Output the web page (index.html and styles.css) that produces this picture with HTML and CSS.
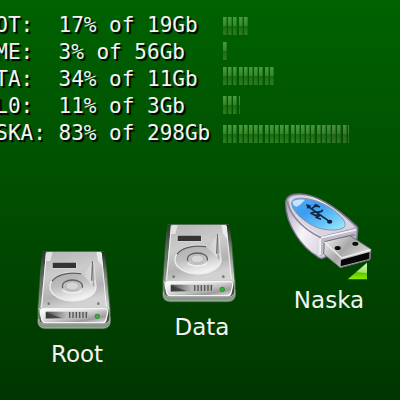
FILE: index.html
```
<!DOCTYPE html>
<html lang="en">
<head>
    <meta charset="UTF-8">
    <meta name="viewport" content="width=device-width, initial-scale=1.0">
    <title>Desktop</title>
    <link rel="stylesheet" href="styles.css">
</head>
<body>

    <!-- Gradients and the drive drawing shared by the icons -->
    <svg class="defs" aria-hidden="true">
        <defs>
            <linearGradient id="driveTop" x1="0" y1="0" x2="0.3" y2="1">
                <stop offset="0" stop-color="#b4b4b4"/>
                <stop offset="0.45" stop-color="#cccccc"/>
                <stop offset="0.8" stop-color="#b2b2b2"/>
                <stop offset="1" stop-color="#d2d2d2"/>
            </linearGradient>
            <linearGradient id="driveSide" x1="0" y1="0" x2="0" y2="1">
                <stop offset="0" stop-color="#1c2a1c"/>
                <stop offset="0.4" stop-color="#7c867c"/>
                <stop offset="1" stop-color="#d8dcd8"/>
            </linearGradient>
            <linearGradient id="driveFront" x1="0" y1="0" x2="1" y2="1">
                <stop offset="0" stop-color="#ffffff"/>
                <stop offset="0.4" stop-color="#e0e0e0"/>
                <stop offset="0.75" stop-color="#9c9c9c"/>
                <stop offset="1" stop-color="#e8e8e8"/>
            </linearGradient>
            <linearGradient id="driveVent" x1="0" y1="0" x2="1" y2="0">
                <stop offset="0" stop-color="#4c4c4c"/>
                <stop offset="0.5" stop-color="#bcbcbc"/>
                <stop offset="1" stop-color="#b4b4b4"/>
            </linearGradient>
            <linearGradient id="disc" x1="0" y1="0" x2="0.4" y2="1">
                <stop offset="0" stop-color="#acacac"/>
                <stop offset="0.5" stop-color="#bebebe"/>
                <stop offset="1" stop-color="#f2f2f2"/>
            </linearGradient>
            <linearGradient id="arm" x1="0" y1="0" x2="1" y2="0">
                <stop offset="0" stop-color="#c4c4c4"/>
                <stop offset="0.8" stop-color="#dedede"/>
                <stop offset="1" stop-color="#909090"/>
            </linearGradient>
            <linearGradient id="usbBody" x1="0" y1="0.3" x2="1" y2="0.7">
                <stop offset="0" stop-color="#b8b2c4"/>
                <stop offset="0.3" stop-color="#f6f4f8"/>
                <stop offset="0.6" stop-color="#dcd8e2"/>
                <stop offset="1" stop-color="#aaa4b8"/>
            </linearGradient>
            <linearGradient id="usbBlue" x1="0" y1="0" x2="1" y2="1">
                <stop offset="0" stop-color="#58b0f4"/>
                <stop offset="0.35" stop-color="#3c9cf0"/>
                <stop offset="0.7" stop-color="#68c4f8"/>
                <stop offset="1" stop-color="#a4f0fc"/>
            </linearGradient>
            <linearGradient id="usbPlug" x1="0" y1="0" x2="1" y2="0.6">
                <stop offset="0" stop-color="#f8f8f8"/>
                <stop offset="0.5" stop-color="#a8a8a8"/>
                <stop offset="1" stop-color="#dcdcdc"/>
            </linearGradient>
            <linearGradient id="mounted" x1="0.6" y1="0" x2="0.5" y2="1">
                <stop offset="0.1" stop-color="#c8f4a8"/>
                <stop offset="0.55" stop-color="#a0e060"/>
                <stop offset="0.6" stop-color="#5cc800"/>
                <stop offset="1" stop-color="#8cec00"/>
            </linearGradient>
            <symbol id="drive" viewBox="45 42 252 246">
                <!-- base and sides -->
                <path d="M68 48H252L262 110L272 222V264Q270 281 252 283H74Q55 281 52 264V226L60 110Z" fill="#6f8a6f" opacity="0.45"/>
                <path d="M55 252V262Q56 277 74 279H250Q268 277 270 262V246Z" fill="#8a968a" stroke="#c2ccc2" stroke-width="2"/>
                <path d="M67 50H254L269 226H55Z" fill="url(#driveSide)"/>
                <path d="M67 50L80 50L61 218L56 222Z" fill="#3c463c" opacity="0.5"/>
                <!-- lid -->
                <path d="M78 50H244L260 218H63Z" fill="url(#driveTop)"/>
                <path d="M82 51H98L91 78H78Z" fill="#efefef" opacity="0.75"/>
                <path d="M229 51H243L247 94L234 76Z" fill="#f4f4f4" opacity="0.8"/>
                <path d="M79 54L65 216M244 54L259 214" fill="none" stroke="#f2f2f2" stroke-width="3"/>
                <rect x="95" y="81" width="75" height="20" rx="3" fill="#d8d8d8"/>
                <rect x="98" y="83" width="70" height="16" fill="#343434"/>
                <!-- platter and arm -->
                <ellipse cx="159" cy="155" rx="69" ry="43" fill="url(#disc)" stroke="#eeeeee" stroke-width="4"/>
                <path d="M96 139C108 120 144 110 184 116" fill="none" stroke="#5a5a5a" stroke-width="4"/>
                <path d="M183 116C201 108 214 91 220 71L223 157C211 142 199 130 183 116Z" fill="url(#arm)"/>
                <path d="M218 78L215 137" stroke="#707070" stroke-width="4"/>
                <path d="M221 76L227 150" stroke="#e4e4e4" stroke-width="3"/>
                <ellipse cx="157" cy="153" rx="31" ry="19" fill="#c2c2c2"/>
                <path d="M128 159C124 143 140 135 157 135S190 143 187 158" fill="none" stroke="#606060" stroke-width="4"/>
                <ellipse cx="157" cy="153" rx="19" ry="12" fill="#d6d6d6" stroke="#a6a6a6" stroke-width="2"/>
                <path d="M128 166Q157 182 186 166" fill="none" stroke="#f2f2f2" stroke-width="4"/>
                <circle cx="86" cy="206" r="4" fill="#777777"/>
                <circle cx="235" cy="206" r="4" fill="#777777"/>
                <!-- front panel -->
                <path d="M62 219H261Q269 223 269 232V250Q267 265 253 266H72Q58 265 57 252V232Q57 223 62 219Z" fill="#404840" stroke="#c4ccc4" stroke-width="2"/>
                <path d="M66 221H258Q265 224 263 233L258 255Q256 263 247 263H76Q67 263 65 254L61 234Q59 223 66 221Z" fill="url(#driveFront)" stroke="#f4f4f4" stroke-width="4"/>
                <rect x="77" y="230" width="127" height="21" fill="url(#driveVent)"/>
                <path d="M78 232L124 249H78Z" fill="#282828" opacity="0.6"/>
                <path d="M149 231V249M159 231V249M169 231V249M179 231V249M189 231V249M199 231V249" stroke="#555555" stroke-width="4"/>
                <circle cx="232" cy="244" r="8" fill="#4c804c"/>
                <circle cx="232" cy="244" r="5" fill="#22c022"/>
            </symbol>
        </defs>
    </svg>

    <main class="desktop">
        <section class="monitor">
            <div class="usage">
                <div class="usage-row">ROOT:  17% of 19Gb</div>
                <div class="usage-row">HOME:  3% of 56Gb</div>
                <div class="usage-row">DATA:  34% of 11Gb</div>
                <div class="usage-row">VOL0:  11% of 3Gb</div>
                <div class="usage-row">NASKA: 83% of 298Gb</div>
            </div>
            <div class="meters">
                <div class="meter"><div class="meter-fill" style="width: 17%"></div></div>
                <div class="meter"><div class="meter-fill" style="width: 3%"></div></div>
                <div class="meter"><div class="meter-fill" style="width: 34%"></div></div>
                <div class="meter spaced"><div class="meter-fill" style="width: 11%"></div></div>
                <div class="meter spaced"><div class="meter-fill" style="width: 83%"></div></div>
            </div>
        </section>

        <button type="button" class="icon icon-root">
            <svg class="drive-art" aria-hidden="true"><use href="#drive"/></svg>
            <span class="icon-label">Root</span>
        </button>

        <button type="button" class="icon icon-data">
            <svg class="drive-art" aria-hidden="true"><use href="#drive"/></svg>
            <span class="icon-label">Data</span>
        </button>

        <button type="button" class="icon icon-naska">
            <svg class="usb-art" viewBox="25 35 276 270" aria-hidden="true">
                <!-- body -->
                <path d="M33 66C35 47 52 40 77 41C121 43 181 77 244 136Q251 141 249 151L246 183L142 235Q133 234 125 226C87 204 32 138 33 66Z" fill="url(#usbBody)" stroke="#77718b" stroke-width="4"/>
                <path d="M38 62C43 98 78 142 136 171L240 147" fill="none" stroke="#8d87a0" stroke-width="5"/>
                <path d="M42 57C48 48 62 45 80 47C126 50 184 86 239 139L234 144L139 164C85 139 45 98 42 57Z" fill="#d9d5e0"/>
                <path d="M139 173L243 150L240 181L150 202L142 230L135 226Z" fill="#c0bacb"/>
                <path d="M139 172L244 148" stroke="#f4f2f6" stroke-width="5"/>
                <path d="M137 176L136 223" stroke="#f4f2f6" stroke-width="5"/>
                <path d="M148 190L240 163" stroke="#948ca6" stroke-width="7"/>
                <!-- blue plate -->
                <path d="M51 67C54 55 68 52 88 54C126 58 169 78 198 108C209 119 214 131 210 139C199 151 166 151 143 146C109 140 50 98 51 67Z" fill="url(#usbBlue)" stroke="#8493ac" stroke-width="3"/>
                <path d="M54 66C57 57 72 56 91 58C83 65 77 76 65 79C58 78 54 72 54 66Z" fill="#e0f2ff" opacity="0.8"/>
                <g fill="none" stroke="#10233c" stroke-width="5" stroke-linejoin="round">
                    <path d="M101 79L165 124"/>
                    <path d="M111 85L124 76L136 80"/>
                    <path d="M126 96L141 93L144 88"/>
                    <path d="M122 94L109 99L121 105L133 104"/>
                    <path d="M137 105L124 111L139 117"/>
                </g>
                <path d="M94 71L110 76L99 86Z" fill="#10233c"/>
                <ellipse cx="165" cy="124" rx="8" ry="6" fill="#10233c"/>
                <path d="M121 71L132 74L127 80L117 77Z" fill="#10233c"/>
                <!-- plug -->
                <path d="M149 184L226 166L289 207L286 238L197 262L147 221Z" fill="url(#usbPlug)" stroke="#70707a" stroke-width="3"/>
                <path d="M149 185L201 233L288 208" fill="none" stroke="#f0f0f0" stroke-width="4"/>
                <path d="M199 239L285 215L284 236L198 258Z" fill="#050505"/>
                <ellipse cx="189" cy="203" rx="9" ry="6" fill="#0c0c0c"/>
                <ellipse cx="242" cy="190" rx="9" ry="6" fill="#0c0c0c"/>
                <!-- mounted mark -->
                <path d="M277 247V297H219Z" fill="url(#mounted)"/>
            </svg>
            <span class="icon-label">Naska</span>
        </button>
    </main>

</body>
</html>
```
FILE: styles.css
```
body {
    margin: 0;
    overflow: hidden;
    background-color: #003800;
    color: #fff;
}

.defs {
    position: absolute;
    width: 0;
    height: 0;
}

.desktop {
    position: relative;
    min-height: 100vh;
    overflow: hidden;
    background: linear-gradient(#006200, #005000 45%, #003600);
}

/* Disk usage, runs past the left edge of the screen */
.monitor {
    display: flex;
    gap: 13px;
    margin-left: -30px;
    padding-top: 12px;
}

.usage {
    font-family: "DejaVu Sans Mono", monospace;
    font-size: 21px;
    line-height: 27px;
    color: #f4f4f4;
    text-shadow: 2px 2px 1px #000;
}

.usage-row {
    white-space: pre;
}

.meters {
    width: 152px;
    padding-top: 5px;
}

.meter {
    height: 18px;
    margin-bottom: 7px;
}

.meter.spaced {
    margin-top: 11px;
}

.meter-fill {
    height: 100%;
    background:
        linear-gradient(90deg, transparent 50%, rgba(72, 72, 72, 0.3)) 0 0 / 152px 18px,
        linear-gradient(#4a9a3e, #348428 50%, #1c6c12 52%, #307c24);
    -webkit-mask: linear-gradient(90deg, #000 3px, #0009 3px 4px, transparent 4px 5px, #000 5px 8px, #0009 8px 9px, transparent 9px 10px, #000 10px 13px, #0009 13px 14px, transparent 14px 16px, #000 16px 19px, #0009 19px 20px, transparent 20px 21px, #000 21px 24px, #0009 24px 25px, transparent 25px) 0 0 / 26px 18px;
    mask: linear-gradient(90deg, #000 3px, #0009 3px 4px, transparent 4px 5px, #000 5px 8px, #0009 8px 9px, transparent 9px 10px, #000 10px 13px, #0009 13px 14px, transparent 14px 16px, #000 16px 19px, #0009 19px 20px, transparent 20px 21px, #000 21px 24px, #0009 24px 25px, transparent 25px) 0 0 / 26px 18px;
}

/* Desktop icons */
.icon {
    position: absolute;
    display: flex;
    flex-direction: column;
    align-items: center;
    gap: 9px;
    width: 128px;
    padding: 0;
    border: 0;
    background: none;
    color: #f4f4f4;
    cursor: pointer;
}

.icon-root {
    left: 13px;
    top: 249px;
}

.icon-data {
    left: 138px;
    top: 222px;
}

.icon-naska {
    left: 265px;
    top: 192px;
    gap: 4px;
}

.drive-art {
    width: 84px;
    height: 82px;
}

.usb-art {
    width: 92px;
    height: 90px;
}

.icon-label {
    font-family: "DejaVu Sans", sans-serif;
    font-size: 23px;
    line-height: 28px;
}
```
